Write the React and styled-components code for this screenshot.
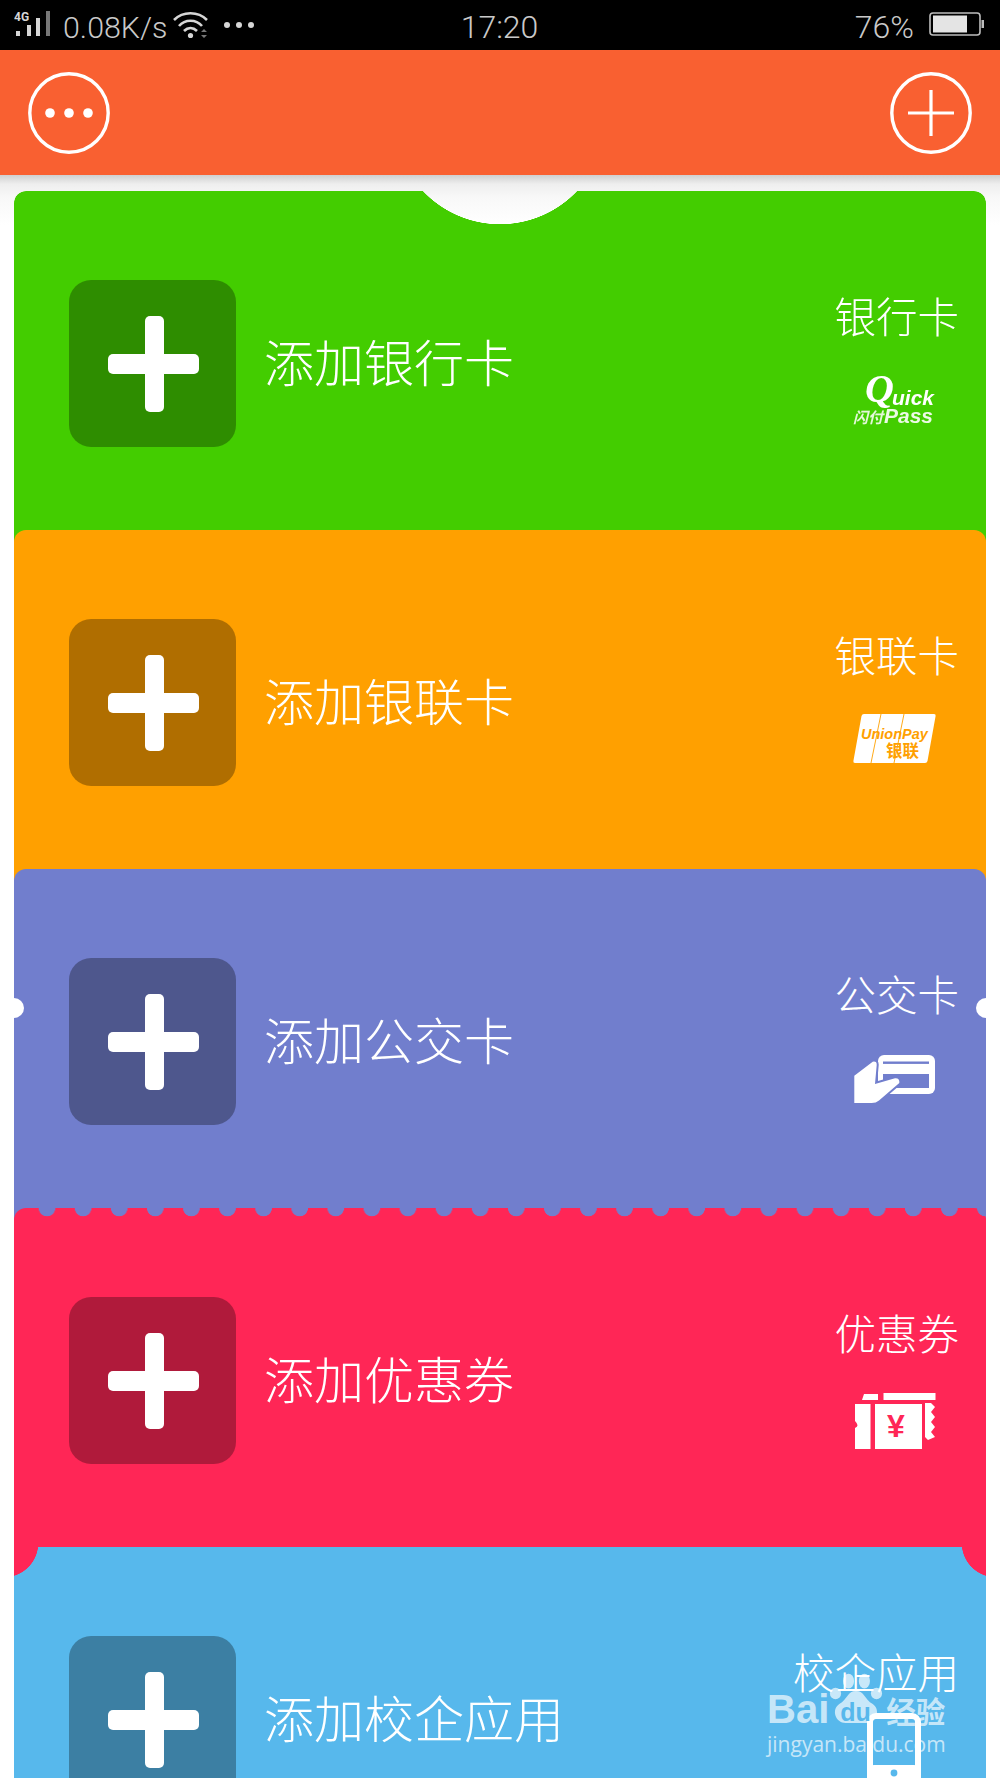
import React from 'react';
import styled, { createGlobalStyle, css } from 'styled-components';

const CJK = '"Noto Sans CJK SC", "Noto Sans", sans-serif';

const GlobalStyle = createGlobalStyle`
  html, body {
    margin: 0;
    height: 1778px;
    overflow: hidden;
    background: #fff;
  }
  #root {
    height: 1778px;
    overflow: hidden;
  }
`;

const Screen = styled.div`
  position: relative;
  width: 1000px;
  height: 1778px;
  overflow: hidden;
  font-family: ${CJK};
`;

const StatusBar = styled.div`
  height: 50px;
  background: #000;
  color: #c9c9c9;
  display: grid;
  grid-template-columns: 1fr auto 1fr;
  align-items: center;
  padding: 0 15px 0 14px;
  font-family: Roboto, "Liberation Sans", sans-serif;
  font-weight: 300;
  font-size: 32px;
`;

const StatusLeft = styled.div`
  display: flex;
  align-items: center;
`;

const StatusRight = styled.div`
  display: flex;
  align-items: center;
  justify-content: flex-end;
  gap: 15px;
`;

const SpeedText = styled.span`
  margin: 4px 5px 0 11px;
  font-size: 30.4px;
`;

const StatusText = styled.span`
  margin-top: 4px;
`;

const MoreDots = styled.span`
  display: flex;
  margin-left: 14px;
`;

const TopBar = styled.header`
  height: 125px;
  background: #f96031;
  display: flex;
  align-items: center;
  justify-content: space-between;
  padding: 0 28px;
`;

const CardStack = styled.main`
  padding: 16px 14px 0;
  background: linear-gradient(#cfcfcf 0, #eeeeee 9px, #f8f8f8 22px, #ffffff 50px);
`;

const notchStyle = css`
  mask-image: radial-gradient(circle at 50% -73px, transparent 106px, #000 106.5px);
`;

const holesStyle = css`
  &::before,
  &::after {
    content: '';
    position: absolute;
    top: 129px;
    width: 20px;
    height: 20px;
    border-radius: 50%;
    background: #fff;
  }
  &::before {
    left: -10px;
  }
  &::after {
    right: -10px;
  }
`;

const perforatedStyle = css`
  &::before {
    content: '';
    position: absolute;
    top: 0;
    left: 15px;
    right: 0;
    height: 9px;
    background: radial-gradient(circle at 18px 0, ${(p) => p.$under} 8px, transparent 8.6px) 0 0 / 36.1px 9px repeat-x;
  }
`;

const corneredStyle = css`
  &::before,
  &::after {
    content: '';
    position: absolute;
    top: 0;
    width: 24px;
    height: 30px;
  }
  &::before {
    left: 0;
    background: radial-gradient(circle at -10px -4px, ${(p) => p.$under} 34px, transparent 34.6px);
  }
  &::after {
    right: 0;
    background: radial-gradient(circle at 34px -4px, ${(p) => p.$under} 34px, transparent 34.6px);
  }
`;

const Card = styled.section`
  position: relative;
  height: 351px;
  margin-bottom: -12px;
  box-sizing: border-box;
  padding: 89px 27px 0 55px;
  display: flex;
  align-items: flex-start;
  border-radius: ${(p) => (p.$edge === 'cornered' ? '0' : '12px 12px 0 0')};
  background: ${(p) => p.$bg};
  color: #fff;
  ${(p) => p.$edge === 'notch' && notchStyle}
  ${(p) => p.$edge === 'holes' && holesStyle}
  ${(p) => p.$edge === 'perforated' && perforatedStyle}
  ${(p) => p.$edge === 'cornered' && corneredStyle}
`;

const AddTile = styled.div`
  width: 167px;
  height: 167px;
  flex-shrink: 0;
  border-radius: 22px;
  background: rgba(0, 0, 0, 0.31);
  display: flex;
  align-items: center;
  justify-content: center;
  svg {
    margin-left: 2px;
  }
`;

const CardTitle = styled.div`
  height: 160px;
  margin-left: 28px;
  display: flex;
  align-items: center;
  font-size: 50px;
  font-weight: 300;
  line-height: 1;
  white-space: nowrap;
`;

const Side = styled.div`
  margin-left: auto;
  padding-top: 9px;
  display: flex;
  flex-direction: column;
  align-items: flex-end;
`;

const SideLabel = styled.div`
  font-size: 41.5px;
  font-weight: 300;
  line-height: 52px;
  white-space: nowrap;
`;

const SideIcon = styled.div`
  width: 84px;
  height: 52px;
  margin: 33px 23px 0 0;
  display: flex;
  align-items: center;
  justify-content: center;
  svg {
    flex-shrink: 0;
    display: block;
  }
`;

const Watermark = styled.div`
  position: absolute;
  left: 767px;
  top: 1688px;
  color: rgba(255, 255, 255, 0.68);
`;

const WatermarkLogo = styled.div`
  display: flex;
  align-items: flex-end;
  height: 40px;
  font-family: "Liberation Sans", sans-serif;
  font-weight: 700;
  font-size: 40px;
  line-height: 38px;
`;

const WatermarkHan = styled.span`
  margin-left: 3px;
  font-family: ${CJK};
  font-size: 29.5px;
  line-height: 36px;
`;

const WatermarkUrl = styled.div`
  margin-top: 1px;
  font-family: "Open Sans", sans-serif;
  font-size: 21px;
  line-height: 30px;
  white-space: nowrap;
`;

const PawDu = styled.span`
  position: relative;
  width: 54px;
  height: 56px;
  flex-shrink: 0;
  svg {
    display: block;
  }
`;

const PawText = styled.span`
  position: absolute;
  left: 11px;
  bottom: 3px;
  font-size: 25px;
  line-height: 25px;
  color: #57b8ec;
`;

function SignalIcon() {
  return (
    <svg width="38" height="28" viewBox="0 0 38 28">
      <text x="0" y="10" fontSize="12" fontWeight="700" fill="#d6d6d6" fontFamily="Roboto, sans-serif">4G</text>
      <rect x="2" y="20" width="4" height="5" fill="#d6d6d6" />
      <rect x="13" y="14" width="4" height="11" fill="#d6d6d6" />
      <rect x="22" y="7" width="4" height="18" fill="#d6d6d6" />
      <rect x="32" y="0" width="4" height="25" fill="#777" />
    </svg>
  );
}

function WifiIcon() {
  return (
    <svg width="36" height="28" viewBox="0 0 36 28" fill="none" stroke="#d6d6d6" strokeWidth="2.6">
      <path d="M1 9 C10 0 25 0 34 9" />
      <path d="M6 15 C12 8 23 8 29 15" />
      <path d="M11 20 C15 16 20 16 24 20" />
      <circle cx="17.5" cy="24.5" r="2.6" fill="#d6d6d6" stroke="none" />
      <path d="M28 21 L34 21 L31 18 Z M28 24 L34 24 L31 27 Z" fill="#777" stroke="none" />
    </svg>
  );
}

function DotsIcon() {
  return (
    <svg width="32" height="8" viewBox="0 0 32 8" fill="#d6d6d6">
      <circle cx="4" cy="4" r="3" />
      <circle cx="16" cy="4" r="3" />
      <circle cx="28" cy="4" r="3" />
    </svg>
  );
}

function BatteryIcon() {
  return (
    <svg width="56" height="26" viewBox="0 0 56 26">
      <rect x="1" y="1" width="50" height="22" rx="3" fill="none" stroke="#bdbdbd" strokeWidth="1.6" />
      <rect x="4" y="3.5" width="34" height="17" fill="#e4e4e4" />
      <rect x="52.5" y="8" width="2.5" height="8" fill="#bdbdbd" />
    </svg>
  );
}

function RoundMore() {
  return (
    <svg width="82" height="82" viewBox="0 0 82 82" fill="#fff">
      <circle cx="41" cy="41" r="39.2" fill="none" stroke="#fff" strokeWidth="3.4" />
      <circle cx="22" cy="41" r="4.8" />
      <circle cx="41" cy="41" r="4.8" />
      <circle cx="60" cy="41" r="4.8" />
    </svg>
  );
}

function RoundPlus() {
  return (
    <svg width="82" height="82" viewBox="0 0 82 82" fill="none" stroke="#fff">
      <circle cx="41" cy="41" r="39.2" strokeWidth="3.4" />
      <path d="M41 18 V64 M18 41 H64" strokeWidth="3.2" />
    </svg>
  );
}

function PlusMark() {
  return (
    <svg width="91" height="96" viewBox="0 0 91 96" fill="#fff">
      <rect x="37" y="0" width="19" height="96" rx="5" />
      <rect x="0" y="38" width="91" height="20" rx="5" />
    </svg>
  );
}

function QuickPassIcon() {
  return (
    <svg width="84" height="52" viewBox="0 0 84 52" fill="#fff" fontStyle="italic" fontWeight="700">
      <text x="13" y="28" fontSize="40" fontFamily='"Liberation Serif", serif'>Q</text>
      <text x="40" y="31" fontSize="21" fontFamily='"Liberation Sans", sans-serif'>uick</text>
      <text x="1" y="49" fontSize="15" fontFamily={CJK} opacity="0.85">闪付</text>
      <text x="32" y="49" fontSize="21" fontFamily='"Liberation Sans", sans-serif' opacity="0.9">Pass</text>
    </svg>
  );
}

function UnionPayIcon({ color }) {
  return (
    <svg width="84" height="52" viewBox="0 0 84 52">
      <path d="M12 1 H82 Q84 1 83.6 3 L75.5 48 Q75 50 73 50 H3 Q1 50 1.4 48 L9.5 3 Q10 1 12 1 Z" fill="#fff" />
      <path d="M29 1 L19 50 M52 1 L42 50" stroke={color} strokeWidth="0.9" fill="none" />
      <text x="9" y="26" fontSize="14.5" fontWeight="700" fontStyle="italic" fontFamily='"Liberation Sans", sans-serif' fill={color}>UnionPay</text>
      <text x="34" y="44" fontSize="16.5" fontWeight="700" fontFamily={CJK} fill={color}>银联</text>
    </svg>
  );
}

function TransitIcon({ color }) {
  return (
    <svg width="84" height="52" viewBox="0 0 84 52">
      <rect x="26" y="3" width="57" height="39" rx="6" fill="#fff" />
      <rect x="31" y="9.5" width="46" height="2.4" fill={color} />
      <rect x="31" y="22" width="46" height="14" fill={color} />
      <path
        d="M2.3 23.7 L20.7 9.7 Q25 9 24.7 13 L23 32 L43 26.3 Q48 26 47.3 31 L27 48.5 Q24 51 19.7 51 L2.3 51 Z"
        fill="#fff"
        stroke={color}
        strokeWidth="4"
        paintOrder="stroke"
      />
    </svg>
  );
}

function CouponIcon({ color }) {
  return (
    <svg width="84" height="64" viewBox="0 -6 84 64" fill="#fff">
      <path d="M12 3 H26 V9 H10 Z" />
      <rect x="31.5" y="2" width="52" height="7" />
      <path d="M73 12 H79 L83 16 L79 21 L83 26 L79 31 L83 36 L79 41 L83 46 L76 49 L73 46 Z" />
      <path d="M3 13 H18.5 V58 H3 V37 Q8 35 3 30 Z" />
      <rect x="23" y="13" width="47" height="45" />
      <text x="44" y="46" fontSize="32" fontWeight="700" textAnchor="middle" fontFamily='"Liberation Sans", sans-serif' fill={color}>¥</text>
    </svg>
  );
}

function PhoneIcon() {
  return (
    <svg width="54" height="86" viewBox="0 0 54 86">
      <rect x="3" y="3" width="48" height="80" rx="6" fill="none" stroke="#fff" strokeWidth="6" />
      <rect x="3" y="52" width="48" height="31" rx="4" fill="#fff" />
      <circle cx="27" cy="60" r="3.4" fill="#57b8ec" />
    </svg>
  );
}

function PawIcon() {
  return (
    <svg width="54" height="56" viewBox="0 0 58 68" preserveAspectRatio="none" fill="rgba(255,255,255,0.68)">
      <ellipse cx="7" cy="26" rx="6" ry="7" />
      <ellipse cx="21" cy="11" rx="6" ry="9" />
      <ellipse cx="38" cy="11" rx="6" ry="9" />
      <ellipse cx="51" cy="26" rx="6" ry="7" />
      <path d="M29 23 C38 23 38 33 47 39 C56 46 51 63 39 62 C33 62 25 62 19 62 C7 63 2 46 11 39 C20 33 20 23 29 23 Z" />
    </svg>
  );
}

const CARDS = [
  { title: '添加银行卡', label: '银行卡', bg: '#43cd00', edge: 'notch', icon: QuickPassIcon },
  { title: '添加银联卡', label: '银联卡', bg: '#ffa000', icon: UnionPayIcon },
  { title: '添加公交卡', label: '公交卡', bg: '#717ecd', edge: 'holes', icon: TransitIcon },
  { title: '添加优惠券', label: '优惠券', bg: '#ff2656', edge: 'perforated', under: '#717ecd', icon: CouponIcon },
  { title: '添加校企应用', label: '校企应用', bg: '#57b8ec', edge: 'cornered', under: '#ff2656', icon: PhoneIcon },
];

export default function App() {
  return (
    <Screen>
      <GlobalStyle />
      <StatusBar>
        <StatusLeft>
          <SignalIcon />
          <SpeedText>0.08K/s</SpeedText>
          <WifiIcon />
          <MoreDots>
            <DotsIcon />
          </MoreDots>
        </StatusLeft>
        <StatusText>17:20</StatusText>
        <StatusRight>
          <StatusText>76%</StatusText>
          <BatteryIcon />
        </StatusRight>
      </StatusBar>
      <TopBar>
        <RoundMore />
        <RoundPlus />
      </TopBar>
      <CardStack>
        {CARDS.map(({ title, label, bg, edge, under, icon: Icon }) => (
          <Card key={title} $bg={bg} $edge={edge} $under={under}>
            <AddTile>
              <PlusMark />
            </AddTile>
            <CardTitle>{title}</CardTitle>
            <Side>
              <SideLabel>{label}</SideLabel>
              <SideIcon>
                <Icon color={bg} />
              </SideIcon>
            </Side>
          </Card>
        ))}
      </CardStack>
      <Watermark>
        <WatermarkLogo>
          Bai
          <PawDu>
            <PawIcon />
            <PawText>du</PawText>
          </PawDu>
          <WatermarkHan>经验</WatermarkHan>
        </WatermarkLogo>
        <WatermarkUrl>jingyan.baidu.com</WatermarkUrl>
      </Watermark>
    </Screen>
  );
}
